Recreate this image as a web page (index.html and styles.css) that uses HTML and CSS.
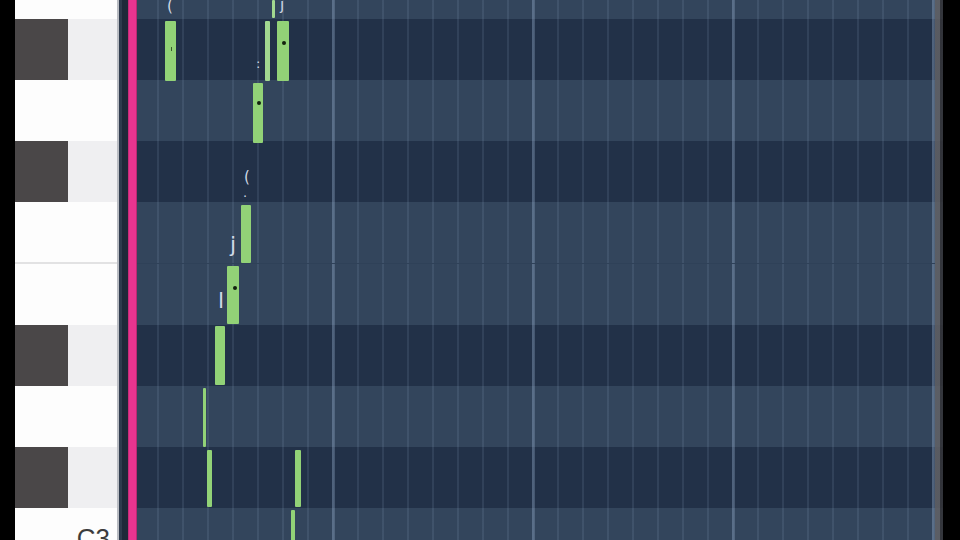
FILE: index.html
```html
<!DOCTYPE html>
<html lang="en">
<head>
<meta charset="utf-8">
<title>Piano roll</title>
<link rel="stylesheet" href="styles.css">
</head>
<body>
<div class="screen">
  <div class="edge"></div>
  <div class="keys">
    <div class="key white first"></div>
    <div class="key black"><span class="bk"></span></div>
    <div class="key white"></div>
    <div class="key black"><span class="bk"></span></div>
    <div class="key white split"></div>
    <div class="key white"></div>
    <div class="key black"><span class="bk"></span></div>
    <div class="key white"></div>
    <div class="key black"><span class="bk"></span></div>
    <div class="key white"><span class="label">C3</span></div>
  </div>
  <div class="sep"></div>
  <div class="strip"></div>
  <div class="playhead"></div>
  <div class="grid">
    <div class="lane light first"></div>
    <div class="lane dark"></div>
    <div class="lane light"></div>
    <div class="lane dark"></div>
    <div class="lane light split"></div>
    <div class="lane light"></div>
    <div class="lane dark"></div>
    <div class="lane light"></div>
    <div class="lane dark"></div>
    <div class="lane light"></div>

    <div class="note" style="left:28px;top:21px;width:11px;height:60px"></div>
    <div class="note pale" style="left:128px;top:21px;width:5px;height:60px"></div>
    <div class="note" style="left:140px;top:21px;width:12px;height:60px"></div>
    <div class="note pale" style="left:135px;top:0;width:3px;height:18px"></div>
    <div class="note" style="left:116px;top:83px;width:10px;height:60px"></div>
    <div class="note" style="left:104px;top:205px;width:10px;height:58px"></div>
    <div class="note" style="left:90px;top:266px;width:12px;height:58px"></div>
    <div class="note" style="left:78px;top:326px;width:10px;height:59px"></div>
    <div class="note" style="left:66px;top:388px;width:3px;height:59px"></div>
    <div class="note" style="left:70px;top:450px;width:5px;height:57px"></div>
    <div class="note" style="left:158px;top:450px;width:6px;height:57px"></div>
    <div class="note" style="left:154px;top:510px;width:4px;height:40px"></div>

    <span class="glyph" style="left:30px;top:-3px">(</span>
    <span class="glyph" style="left:143px;top:-4px">j</span>
    <span class="glyph small" style="left:119px;top:55px">:</span>
    <span class="glyph" style="left:107px;top:168px">(</span>
    <span class="glyph small" style="left:106px;top:184px">.</span>
    <span class="glyph big" style="left:93px;top:232px">j</span>
    <span class="glyph big" style="left:81px;top:288px">l</span>

    <span class="dot" style="left:145px;top:41px"></span>
    <span class="dot" style="left:120px;top:101px"></span>
    <span class="dot" style="left:96px;top:286px"></span>
    <span class="tick" style="left:34px;top:47px"></span>

    <div class="scrollbar"></div>
  </div>
  <div class="void"></div>
</div>
</body>
</html>
```

FILE: styles.css
```css
* { box-sizing: border-box; }

html, body {
  margin: 0;
  padding: 0;
  background: #000;
  overflow: hidden;
}

.screen {
  width: 960px;
  height: 540px;
  display: flex;
  overflow: hidden;
  font-family: "Liberation Sans", Arial, sans-serif;
}

.edge {
  width: 15px;
  flex-shrink: 0;
  background: #000;
}

.keys {
  width: 102px;
  flex-shrink: 0;
  display: flex;
  flex-direction: column;
  overflow: hidden;
  background: #fff;
}

.key {
  height: 61.1px;
  flex-shrink: 0;
  display: flex;
}

.key.first,
.lane.first {
  margin-top: -41.9px;
}

.key.white {
  background: #fdfdfd;
  justify-content: flex-end;
  align-items: flex-start;
}

.key.split {
  border-bottom: 2px solid #e2e2e3;
}

.key.black {
  background: #efeff1;
}

.bk {
  width: 53px;
  background: #4a4748;
}

.label {
  font-size: 26px;
  line-height: 26px;
  color: #3c3c3c;
  padding-top: 16.6px;
  padding-right: 7px;
}

.sep {
  width: 2px;
  flex-shrink: 0;
  background: #b9bcc2;
}

.strip {
  width: 9px;
  flex-shrink: 0;
  background: linear-gradient(to right, #2f3b4d 0 3px, #1f2939 3px);
}

.playhead {
  width: 9px;
  flex-shrink: 0;
  background: linear-gradient(to right, #c92b7a 0 1px, #e8348f 1px 8px, #b72a72 8px);
}

.grid {
  position: relative;
  width: 806px;
  flex-shrink: 0;
  display: flex;
  flex-direction: column;
  overflow: hidden;
}

.lane {
  height: 61.1px;
  flex-shrink: 0;
  background-image:
    repeating-linear-gradient(to right, transparent 0 195px, rgba(150, 175, 205, 0.3) 195px 198px, transparent 198px 200px),
    repeating-linear-gradient(to right, transparent 0 20px, rgba(150, 175, 205, 0.13) 20px 22px, transparent 22px 25px);
}

.lane.dark {
  background-color: #223148;
}

.lane.light {
  background-color: #33455c;
}

.lane.split {
  border-bottom: 1px solid #2f4158;
}

.note {
  position: absolute;
  background: #92d277;
  border-radius: 1px;
}

.note.pale {
  background: #a2d890;
}

.glyph {
  position: absolute;
  font-family: "DejaVu Sans", sans-serif;
  font-size: 15px;
  line-height: 18px;
  color: #cfd9e6;
}

.glyph.small {
  font-size: 13px;
}

.glyph.big {
  font-size: 22px;
  line-height: 26px;
}

.dot {
  position: absolute;
  width: 4px;
  height: 4px;
  border-radius: 50%;
  background: #13220f;
}

.tick {
  position: absolute;
  width: 1px;
  height: 4px;
  background: #3a5a2c;
}

.scrollbar {
  position: absolute;
  right: 0;
  top: 0;
  bottom: 0;
  width: 8px;
  background: linear-gradient(to right, rgba(98, 98, 102, 0.85) 0 5px, rgba(52, 52, 56, 0.88) 5px 8px);
}

.void {
  flex: 1;
  background: #000;
}
```
